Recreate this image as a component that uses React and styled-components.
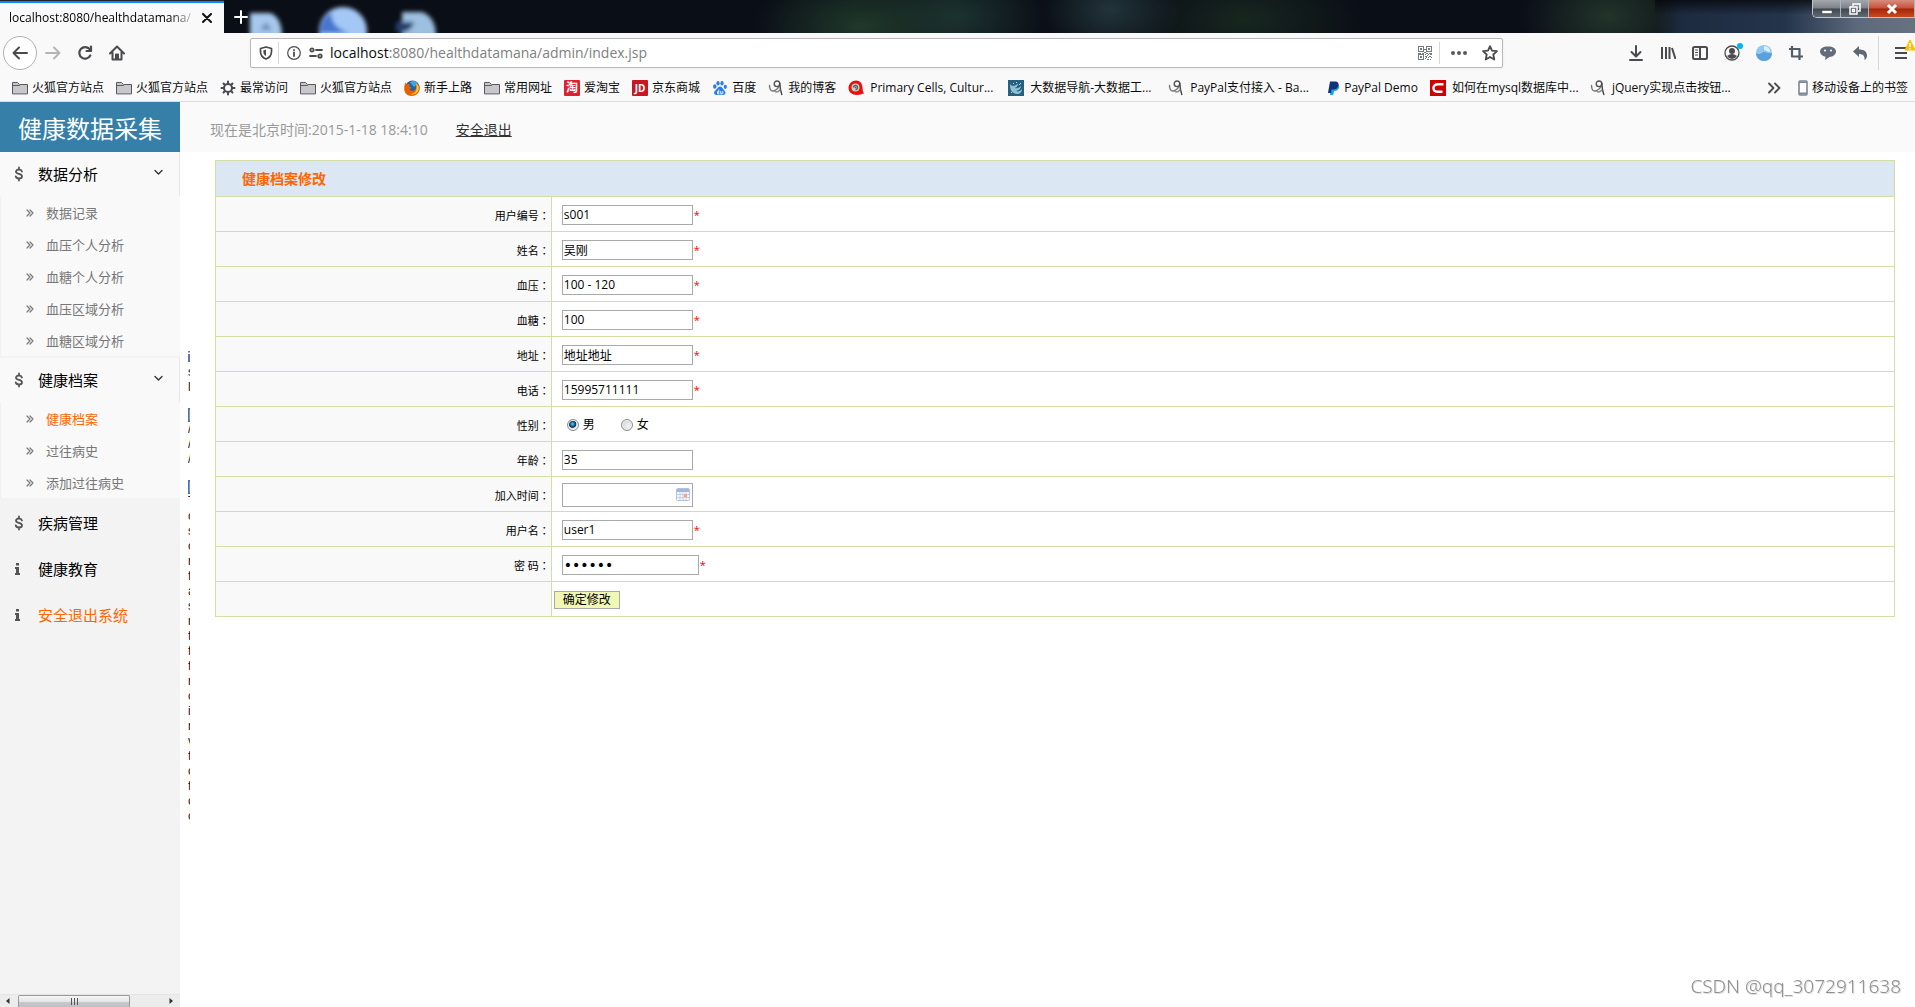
import React, { useState } from "react";
import styled, { createGlobalStyle } from "styled-components";

const GlobalStyle = createGlobalStyle`
    * {
        box-sizing: border-box;
    }
    body {
        margin: 0;
        background: #fff;
        color: #000;
        font-family: "Open Sans", "Noto Sans CJK SC", sans-serif;
        font-size: 12px;
    }
    button, input {
        font-family: inherit;
        color: inherit;
    }
    button {
        cursor: pointer;
    }
    svg {
        display: block;
        flex-shrink: 0;
    }
`;

const Window = styled('div')`
    display: flex;
    flex-direction: column;
    min-height: 100vh;
`;

/* browser frame */

const TitleBar = styled('header')`
    position: relative;
    display: flex;
    height: 33px;
    overflow: hidden;
    background:
        radial-gradient(ellipse 110px 60px at 45% 80%, #20392a, transparent),
        radial-gradient(ellipse 90px 60px at 50% 50%, #1c3230, transparent),
        radial-gradient(ellipse 70px 50px at 58% 30%, #22343a, transparent),
        radial-gradient(ellipse 120px 60px at 65% 60%, #17261f, transparent),
        radial-gradient(ellipse 90px 60px at 84% 50%, #22342a, transparent),
        #0a0e16;
`;

const Tab = styled('div')`
    position: relative;
    display: flex;
    align-items: center;
    width: 224px;
    padding: 2px 8px 0 9px;
    background: #f9f9fa;
    border-top: 1px solid #222;
    box-shadow: inset 0 2px 0 #0a84ff;
`;

const TabTitle = styled('span')`
    flex: 1;
    overflow: hidden;
    white-space: nowrap;
    line-height: 18px;
    mask-image: linear-gradient(to right, #000 85%, transparent);
`;

const PlainButton = styled('button')`
    display: flex;
    align-items: center;
    justify-content: center;
    flex-shrink: 0;
    padding: 0;
    border: 0;
    background: none;
    color: ${props => props.$color || "#4a4a4f"};
    width: ${props => props.$width || 32}px;
    height: ${props => props.$height || 32}px;
`;

const Glass = styled('div')`
    position: absolute;
    top: 0;
    right: 0;
    width: 260px;
    height: 33px;
    background: linear-gradient(to bottom, rgba(5, 8, 12, 0.8), transparent 45%),
        linear-gradient(to right, transparent, #1d2b40 10%, #24344b 50%, #5d6a7c 78%, #68727f);
`;

const WallpaperIcons = styled('svg')`
    position: absolute;
    left: 240px;
    top: 0;
`;

const WindowControls = styled('div')`
    position: absolute;
    top: 0;
    right: 0;
    display: flex;
    height: 18px;
    border: 1px solid #bfc5cb;
    border-top: 0;
    border-right: 0;
    border-radius: 0 0 0 5px;
    overflow: hidden;
`;

const ControlButton = styled('button')`
    display: flex;
    align-items: center;
    justify-content: center;
    width: ${props => props.$close ? 46 : 28}px;
    padding: 0;
    border: 0;
    border-right: 1px solid #aeb5bd;
    background: ${props => props.$close
        ? "linear-gradient(#d88c7e, #c4523b 48%, #a92408 52%, #c54a20)"
        : "linear-gradient(#a3a8ae, #7c828a 48%, #3f464f 52%, #626a74)"};
`;

const NavBar = styled('div')`
    display: flex;
    align-items: center;
    height: 39px;
    padding: 1px 0 0 3px;
    background: #f9f9fa;
`;

const BackButton = styled(PlainButton)`
    border: 1px solid #b1b1b3;
    border-radius: 50%;
    background: #fff;
`;

const Spacer = styled('div')`
    flex: 0 1 117px;
`;

const UrlBar = styled('div')`
    display: flex;
    align-items: center;
    flex: 1;
    height: 30px;
    padding: 0 0 0 2px;
    border: 1px solid #b8b8ba;
    border-radius: 2px;
    background: #fff;
    box-shadow: 0 1px 3px rgba(0, 0, 0, 0.06);
`;

const UrlText = styled('div')`
    flex: 1;
    padding-left: 6px;
    font-size: 14px;
    line-height: 20px;
    color: #808080;
    white-space: nowrap;

    b {
        font-weight: 400;
        color: #0c0c0d;
    }
`;

const Divider = styled('span')`
    width: 1px;
    height: ${props => props.$height || 22}px;
    margin: 0 ${props => props.$gap || 0}px;
    background: #d7d7db;
`;

const Bookmarks = styled('nav')`
    display: flex;
    align-items: center;
    gap: 12px;
    height: 30px;
    padding: 2px 7px 0 12px;
    border-bottom: 1px solid #dcdcde;
    background: #f9f9fa;
`;

const Bookmark = styled('a')`
    display: flex;
    align-items: center;
    gap: ${props => props.$wide ? 6 : 4}px;
    width: ${props => props.$wide ? "148px" : "auto"};
    color: #0c0c0d;
    line-height: 18px;
    text-decoration: none;
    white-space: nowrap;
    flex-shrink: 0;
`;

const BookmarksEnd = styled('div')`
    display: flex;
    align-items: center;
    gap: 8px;
    margin-left: auto;
`;

/* application */

const Page = styled('div')`
    display: flex;
    flex: 1;
`;

const Sidebar = styled('aside')`
    display: flex;
    flex-direction: column;
    width: 180px;
    background: #f3f3f3;
`;

const Brand = styled('h1')`
    margin: 0;
    height: 50px;
    background: #367fa9;
    color: #fff;
    font-size: 24px;
    font-weight: 400;
    line-height: 54px;
    text-align: center;
`;

const Menu = styled('nav')`
    display: flex;
    flex-direction: column;
    flex: 1;
`;

const MenuGroup = styled('div')`
    background: #f9f9f9;
    border-bottom: 2px solid #f3f3f3;
`;

const MenuItem = styled('a')`
    display: flex;
    align-items: center;
    height: ${props => props.$open ? 44 : 46}px;
    padding: 0 16px 0 14px;
    border-right: ${props => props.$open ? "1px solid #e7e7e7" : "0"};
    color: ${props => props.$active ? "#ff6600" : "#000"};
    font-size: 15px;
    line-height: 20px;
    text-decoration: none;
`;

const MenuIcon = styled('span')`
    width: 24px;
    color: #555;
`;

const MenuLabel = styled('span')`
    flex: 1;
`;

const MenuArrow = styled('span')`
    padding-bottom: 4px;
    color: #333;
`;

const SubItem = styled('a')`
    display: flex;
    align-items: center;
    gap: 12px;
    height: 32px;
    padding: 2px 0 0 25px;
    border-left: 1px solid #f1f1f1;
    color: ${props => props.$active ? "#ff6600" : "#777"};
    font-size: 13px;
    line-height: 20px;
    text-decoration: none;

    svg {
        color: #777;
    }
`;

const ScrollTrack = styled('div')`
    display: flex;
    align-items: center;
    height: 13px;
    padding: 0 6px 0 5px;
    background: #ececec;
    border-top: 1px solid #e4e4e4;
`;

const ScrollThumb = styled('div')`
    display: flex;
    align-items: center;
    justify-content: center;
    width: 112px;
    height: 12px;
    margin: 0 auto 0 8px;
    border: 1px solid #9a9a9a;
    border-bottom: 0;
    border-radius: 2px 2px 0 0;
    background: linear-gradient(#f5f5f5, #e6e6e8 50%, #c8c9cc 55%, #bfc0c4);
`;

const Content = styled('div')`
    display: flex;
    flex-direction: column;
    flex: 1;
`;

const TopBar = styled('div')`
    display: flex;
    align-items: center;
    gap: 28px;
    height: 50px;
    padding: 6px 30px 0;
    background: #fafafa;
    color: #999;
    font-size: 14px;
    line-height: 20px;

    a {
        color: #333;
    }
`;

const ContentBody = styled('div')`
    display: flex;
    align-items: flex-start;
    padding: 8px 20px 0 8px;
`;

/* narrow slice of a column of text, the rest of it is cut off */
const Sliver = styled('div')`
    width: 2px;
    margin: 190px 25px 0 0;
    overflow: hidden;
`;

const SliverLine = styled('div')`
    height: 15px;
    margin-bottom: ${props => props.$gap || 0}px;
    color: ${props => props.$head ? "#4f6da0" : "#201020"};
    font-family: "Liberation Sans", sans-serif;
    font-weight: ${props => props.$head ? 700 : 400};
    font-size: ${props => props.$head ? 14 : 12}px;
    line-height: 15px;
    text-indent: ${props => props.$head ? -1 : 0}px;
`;

const FormTable = styled('table')`
    flex: 1;
    border-collapse: collapse;
    table-layout: fixed;

    td, th {
        border: 1px solid #d3dea7;
    }
`;

const TitleCell = styled('th')`
    height: 36px;
    padding: 0 26px;
    background: #dbe7f3;
    color: #ff6600;
    font-size: 14px;
    line-height: 20px;
    text-align: left;
`;

const LabelCell = styled('td')`
    width: 20%;
    height: 35px;
    padding: 2px 1px 0 0;
    background: #f9f9f9;
    font-size: 11px;
    line-height: 18px;
    text-align: right;
`;

const Colon = styled('span')`
    font-family: "Noto Sans CJK TC", sans-serif;
`;

const FieldCell = styled('td')`
    padding: 1px 0 0 ${props => props.$tight ? 2 : 10}px;
`;

const FieldRow = styled('div')`
    display: flex;
    align-items: center;
`;

const TextInput = styled('input')`
    width: ${props => props.$wide ? 137 : 131}px;
    height: ${props => props.$tall ? 24 : 20}px;
    padding: 0 1px;
    border: 1px solid #a9a9a9;
    background: #fff;
    font-size: 12px;
    outline: 0;

    &[type="password"] {
        font-family: "DejaVu Sans", sans-serif;
        font-size: 14px;
    }
`;

const DateBox = styled('div')`
    position: relative;

    svg {
        position: absolute;
        right: 3px;
        top: 5px;
    }
`;

const Star = styled('span')`
    margin-left: 1px;
    color: #f00;
    font-size: 11px;
    line-height: 18px;
`;

const RadioLabel = styled('label')`
    display: flex;
    align-items: center;
    gap: 4px;
    margin: 0 21px 0 5px;
    line-height: 18px;
`;

const Radio = styled('input')`
    appearance: none;
    width: 12px;
    height: 12px;
    margin: 0;
    border: 1px solid #8e8f8f;
    border-radius: 50%;
    background: radial-gradient(circle at 60% 60%, #f4f4f4, #c4c8cc);
    box-shadow: inset 0 0 0 1px #f4f4f4;

    &:checked {
        background: radial-gradient(circle at 45% 40%, #6fd0f5 0, #1b6a9c 25%, #0b2f4d 42%, #e3e6e8 52%);
    }
`;

const SubmitButton = styled('button')`
    width: 66px;
    height: 18px;
    padding: 0;
    border: 1px solid #a9a9a9;
    background: #f1f8b4;
    font-size: 12px;
    line-height: 16px;
`;

const Watermark = styled('div')`
    position: fixed;
    right: 14px;
    bottom: 7px;
    color: #8f8f8f;
    font-family: "Noto Sans", sans-serif;
    font-weight: 300;
    font-size: 19px;
    line-height: 28px;
    text-shadow: 1px 1px 0 #ddd;
`;

/* icons */

const Line = ({ size = 16, box = 16, width = 2, children }) => (
    <svg width={size} height={size} viewBox={`0 0 ${box} ${box}`} fill="none" stroke="currentColor" strokeWidth={width} strokeLinecap="round" strokeLinejoin="round">
        {children}
    </svg>
);

const FolderIcon = () => (
    <Line width={1}>
        <path d="M.5 13.5v-11h5l2 2h8v9z" fill="#c9c7cb" stroke="#58585c" />
        <path d="M.5 5.5h7l1-1" stroke="#58585c" />
    </Line>
);

const GearIcon = () => (
    <Line width={2}>
        <circle cx="8" cy="8" r="4" stroke="#4a4a4f" />
        <path d="M8 1.500v2M8 12.500v2M1.500 8h2M12.500 8h2M3.500 3.500l1 1M11.500 11.500l1 1M12.500 3.500l-1 1M4.500 11.500l-1 1" stroke="#4a4a4f" />
    </Line>
);

const FirefoxIcon = () => (
    <svg width="16" height="16" viewBox="0 0 16 16">
        <circle cx="8.500" cy="7.500" r="7" fill="#1c62ad" />
        <path d="M6 2.500C9 0 13 1 14 4l-4 3z" fill="#43a7df" />
        <path d="M1.500 2.500L3 4.500 6 4l-.5 2.500L8 8l-2.500 1c1 2.500 5 2.500 6.500-.5C13 6 12 4 11 3c3 0 5 3 4.800 6C15 13 12 16 8 16 3 16 0 12.500.2 8.500.2 6 .8 4 1.500 2.500z" fill="#e66000" />
        <path d="M12 3.500c3 2 3.700 5 1.800 8C12 14 9 15 6 14c5 0 8-4 6-10.500z" fill="#ffcb2b" />
    </svg>
);

const TileIcon = ({ bg, label, size = 10 }) => (
    <svg width="16" height="16" viewBox="0 0 16 16">
        <rect width="16" height="16" rx="1" fill={bg} />
        <text x="8" y="12" fontSize={size} fontWeight="700" fill="#fff" textAnchor="middle">{label}</text>
    </svg>
);

const PawIcon = () => (
    <svg width="16" height="16" viewBox="0 0 16 16" fill="#2a7cf0">
        <ellipse cx="2.800" cy="6.500" rx="1.700" ry="2.200" />
        <ellipse cx="6" cy="3.200" rx="1.600" ry="2.300" />
        <ellipse cx="10" cy="3.300" rx="1.600" ry="2.200" />
        <ellipse cx="13.300" cy="6.800" rx="1.600" ry="2.100" />
        <path d="M8 6.500c2 0 2.500 2 4 3.500 2.500 2.500 1.500 5-1 5-1.500 0-4-.3-6 0-3 .3-4-2.500-1.500-4.700C5.500 8.800 6 6.500 8 6.500z" />
        <path d="M6.800 9.500v4.200H5.500v-2h1.300M8.800 11v2.700h2V11" stroke="#fff" strokeWidth=".9" fill="none" />
    </svg>
);

const BlogIcon = () => (
    <Line width={1.4}>
        <path d="M1.500 5.500c0 4 1.500 6 4 5.500 2-.3 4-2 5.500-4.500" stroke="#777" />
        <circle cx="9" cy="3.800" r="2.800" stroke="#555" />
        <path d="M11.800 3.500c.2 4 .7 7.500 2 11" stroke="#444" />
        <path d="M7 11.500c1.500 1 3.500 0 5-1.500" stroke="#888" />
    </Line>
);

const CellsIcon = () => (
    <svg width="16" height="16" viewBox="0 0 16 16">
        <path d="M8 .5c4 0 6.500 3 6.500 7.500 0 2 .5 4 1.500 6-2-1-3 1-7 1C4 15 .5 12 .5 8S4 .5 8 .5z" fill="#f20c0c" />
        <circle cx="7.500" cy="7.500" r="4" fill="#c3d0cb" />
        <path d="M5.500 7.500a2 2 0 1 1 2 2" fill="none" stroke="#456b60" strokeWidth="1.300" />
        <circle cx="7.500" cy="7.500" r=".8" fill="#456b60" />
    </svg>
);

const BigDataIcon = () => (
    <svg width="16" height="16" viewBox="0 0 16 16">
        <rect width="16" height="16" fill="#27607f" />
        <path d="M2.500 4C1 9 4 14 9 14c3 0 5-2 5-5-1.500 2-4 3-6 2 3-.5 5-2.500 5-5-2 2-4 2.500-6 2 2-1 3-2.500 3-4.500C8.500 5 7 6 5 6 4 6 3 5 2.500 4z" fill="#8fbfd3" />
        <path d="M5 3l1 1M8 2l1 1M12 3l1 1M3 12l1 1M11 5l1-1" stroke="#b9dbe8" strokeWidth="1" />
    </svg>
);

const PaypalIcon = () => (
    <svg width="12" height="16" viewBox="0 0 12 16">
        <path d="M4 4h6c2 1 2 6-3 7H6l-.8 4H2z" fill="#1f9fde" />
        <path d="M2 1.500h5c3 0 4 2 3.300 4.500C9.500 8.500 8 9.500 5 9.500H3.500L3 13H0z" fill="#12307c" />
    </svg>
);

const CsdnIcon = () => (
    <svg width="16" height="16" viewBox="0 0 16 16">
        <rect width="16" height="16" fill="#d00000" />
        <path d="M13.500 4.300H8C5 4.300 3.500 6 3.500 8c0 2.500 1.500 3.700 4 3.700h5" fill="none" stroke="#fff" strokeWidth="2.400" />
    </svg>
);

const PhoneIcon = () => (
    <svg width="10" height="16" viewBox="0 0 10 16">
        <rect x="1" y="1" width="8" height="14" rx="1" fill="#fff" stroke="#7c8894" strokeWidth="1.600" />
        <path d="M1 12.500h8v2H1zM1 1.500h8v1.500H1z" fill="#7c8894" />
    </svg>
);

const QrIcon = () => (
    <svg width="14" height="14" viewBox="0 0 14 14" fill="none" stroke="#737883" strokeWidth="1" shapeRendering="crispEdges">
        <path d="M.5.5h5v5h-5zM8.500.5h5v5h-5zM.5 8.500h5v5h-5z" />
        <path d="M2 2h2v2H2zM10 2h2v2h-2zM2 10h2v2H2z" fill="#737883" stroke="none" />
        <path d="M6 3.500h2M6 6.500h2M0 7h3M4 7h2M8 7.500h2M11 7h3M7 8.500h1M10 8.500h1M12 8.500h2M7 10.500h2M9 9.500h1M11 10.500h2M8 11.500h1M10 11.500h1M13 11.500h1M7 12.500h1M9 13.500h2M12 13.500h1" />
    </svg>
);

const CalendarIcon = () => (
    <svg width="14" height="13" viewBox="0 0 14 13">
        <rect x=".5" y=".5" width="13" height="12" rx="1" fill="#f4f7fc" stroke="#b5c1da" />
        <path d="M1 1h12v3H1z" fill="#9db7e8" />
        <path d="M1 6.500h12M1 9.500h12M4 4v8M7 4v8M10 4v8" stroke="#c3cfe6" />
        <path d="M8 6h3v3H8z" fill="#f0a48c" />
    </svg>
);

const AngleIcon = () => (
    <Line size={8} box={8} width={1.200}>
        <path d="M1 1l3 3-3 3M4 1l3 3-3 3" />
    </Line>
);

const DownIcon = () => (
    <Line size={9} box={9} width={1.400}>
        <path d="M1 2.500L4.500 6 8 2.500" />
    </Line>
);

const DollarIcon = () => (
    <Line size={16} box={16} width={1.800}>
        <path d="M8 5.500C7.500 4 6.500 3.500 5 3.500c-2 0-3 .9-3 2.200C2 8.500 8 7.200 8 10.200c0 1.500-1.200 2.300-3 2.300S2 11.700 1.700 10.300M5 1.500v2M5 12.500v2" />
    </Line>
);

const InfoIcon = () => (
    <svg width="8" height="12" viewBox="0 0 8 12" fill="#555">
        <path d="M2 0h3v2.500H2zM1 4h4v6h1v2H1v-2h1V6H1z" />
    </svg>
);

const bookmarks = [
    { label: "火狐官方站点", icon: <FolderIcon /> },
    { label: "火狐官方站点", icon: <FolderIcon /> },
    { label: "最常访问", icon: <GearIcon /> },
    { label: "火狐官方站点", icon: <FolderIcon /> },
    { label: "新手上路", icon: <FirefoxIcon /> },
    { label: "常用网址", icon: <FolderIcon /> },
    { label: "爱淘宝", icon: <TileIcon bg="#e02030" label="淘" size={12} /> },
    { label: "京东商城", icon: <TileIcon bg="#c81623" label="JD" /> },
    { label: "百度", icon: <PawIcon /> },
    { label: "我的博客", icon: <BlogIcon /> },
    { label: "Primary Cells, Cultur...", icon: <CellsIcon />, wide: true },
    { label: "大数据导航-大数据工...", icon: <BigDataIcon />, wide: true },
    { label: "PayPal支付接入 - Ba...", icon: <BlogIcon />, wide: true },
    { label: "PayPal Demo", icon: <PaypalIcon /> },
    { label: "如何在mysql数据库中...", icon: <CsdnIcon />, wide: true },
    { label: "jQuery实现点击按钮...", icon: <BlogIcon />, wide: true },
];

const menuGroups = [
    { label: "数据分析", items: ["数据记录", "血压个人分析", "血糖个人分析", "血压区域分析", "血糖区域分析"] },
    { label: "健康档案", items: ["健康档案", "过往病史", "添加过往病史"], active: 0 },
];

const sliver = [
    { text: "i", head: true }, { text: "s" }, { text: "l", gap: 12 },
    { text: "[", head: true }, { text: "/" }, { text: "/" }, { text: "/", gap: 12 },
    { text: "[", head: true }, { text: "T" },
    ..."csorfasrfffrcirvfcfcc".split("").map(text => ({ text })),
];

const fields = [
    { id: "userId", label: "用户编号", value: "s001", required: true },
    { id: "realName", label: "姓名", value: "吴刚", required: true },
    { id: "pressure", label: "血压", value: "100 - 120", required: true },
    { id: "sugar", label: "血糖", value: "100", required: true },
    { id: "address", label: "地址", value: "地址地址", required: true },
    { id: "phone", label: "电话", value: "15995711111", required: true },
    { id: "sex", label: "性别", type: "radio" },
    { id: "age", label: "年龄", value: "35" },
    { id: "joinDate", label: "加入时间", value: "", type: "date" },
    { id: "userName", label: "用户名", value: "user1", required: true },
    { id: "password", label: "密 码", value: "123456", type: "password", required: true },
];

const BrowserTitle = () => (
    <TitleBar>
        <WallpaperIcons width="210" height="33" viewBox="0 0 210 33">
            <defs>
                <filter id="soft"><feGaussianBlur stdDeviation="2" /></filter>
            </defs>
            <g filter="url(#soft)">
                <path d="M10 13h20q12 4 12 24H10z" fill="#a6c8ec" />
                <path d="M20 30l6-8 6 8z" fill="#6d8fb5" />
                <circle cx="103" cy="31" r="24" fill="#a4c8f5" />
                <path d="M80 33q0-16 12-20-2 14 18 20z" fill="#4576d0" />
                <path d="M162 12h20q14 5 14 25h-34z" fill="#9dbfe0" />
                <path d="M156 22h18q-2 8-10 10h-8z" fill="#20406d" />
            </g>
        </WallpaperIcons>
        <Tab>
            <TabTitle>localhost:8080/healthdatamana/</TabTitle>
            <PlainButton $width={18} $height={18} $color="#111" aria-label="关闭标签页">
                <Line size={10} box={10}><path d="M1 1l8 8M9 1L1 9" /></Line>
            </PlainButton>
        </Tab>
        <PlainButton $color="#fff" $width={34} $height={33} aria-label="新标签页">
            <Line size={14} box={14} width={2}><path d="M7 1v12M1 7h12" /></Line>
        </PlainButton>
        <Glass />
        <WindowControls>
            <ControlButton aria-label="最小化">
                <svg width="12" height="12" viewBox="0 0 12 12"><path d="M1 7.500h10v3H1z" fill="#fff" stroke="#444" strokeWidth=".5" /></svg>
            </ControlButton>
            <ControlButton aria-label="还原">
                <svg width="12" height="12" viewBox="0 0 12 12" fill="none" stroke="#fff" strokeWidth="1.500"><path d="M4 3V1h7v7H9M1 4h7v7H1z" /><path d="M3.500 6.500h2v2h-2z" /></svg>
            </ControlButton>
            <ControlButton $close aria-label="关闭">
                <svg width="12" height="12" viewBox="0 0 12 12" stroke="#fff" strokeWidth="3"><path d="M2 2l8 8M10 2l-8 8" /></svg>
            </ControlButton>
        </WindowControls>
    </TitleBar>
);

const BrowserNav = () => (
    <NavBar>
        <BackButton $width={34} $height={34} aria-label="后退">
            <Line><path d="M15 8H1.500M7 2.500L1.500 8 7 13.500" /></Line>
        </BackButton>
        <PlainButton $color="#b5b5b7" aria-label="前进">
            <Line><path d="M1 8h13.500M9 2.500L14.500 8 9 13.500" /></Line>
        </PlainButton>
        <PlainButton aria-label="刷新">
            <Line width={2.200}><path d="M13.300 10.500a5.800 5.800 0 1 1-.8-6.500M14 1.500V6H9.500" /></Line>
        </PlainButton>
        <PlainButton aria-label="主页">
            <Line>
                <path d="M1 8.500l7-7 7 7M3.500 7.500v7h9v-7" />
                <path d="M6.500 14V9h3v5z" fill="currentColor" strokeWidth="1" />
            </Line>
        </PlainButton>
        <Spacer />
        <UrlBar>
            <PlainButton $width={25} aria-label="跟踪保护">
                <Line size={14} box={14} width={1.700}>
                    <path d="M7 1l5.500 1.500v3C12.500 9 11 11.500 7 13 3 11.500 1.500 9 1.500 5.500v-3z" />
                    <path d="M7 3.500v6.500C5 9 4.300 7.500 4.300 4.500z" fill="currentColor" stroke="none" />
                </Line>
            </PlainButton>
            <Divider />
            <PlainButton $width={29} aria-label="网站信息">
                <Line size={14} box={14} width={1.200}>
                    <circle cx="7" cy="7" r="6.300" />
                    <path d="M7 6.500V10M7 4v.2" strokeWidth="1.800" />
                </Line>
            </PlainButton>
            <PlainButton $width={16} aria-label="权限">
                <Line size={14} box={14} width={1.800}>
                    <circle cx="3" cy="4" r="1.700" /><path d="M7 4h6" />
                    <circle cx="11" cy="10" r="1.700" /><path d="M1 10h6" />
                </Line>
            </PlainButton>
            <UrlText><b>localhost</b>:8080/healthdatamana/admin/index.jsp</UrlText>
            <PlainButton $width={28} aria-label="二维码"><QrIcon /></PlainButton>
            <Divider />
            <PlainButton $width={38} aria-label="页面操作">
                <svg width="16" height="16" viewBox="0 0 16 16" fill="#5a5a5f"><circle cx="2" cy="8" r="2" /><circle cx="8" cy="8" r="2" /><circle cx="14" cy="8" r="2" /></svg>
            </PlainButton>
            <PlainButton $width={24} aria-label="收藏">
                <Line width={1.800}><path d="M8 1.200l2 4.500 5 .5-3.700 3.300 1 5L8 12l-4.300 2.500 1-5L1 6.200l5-.5z" /></Line>
            </PlainButton>
        </UrlBar>
        <Spacer />
        <PlainButton aria-label="下载"><Line><path d="M8 1v10M3.500 7L8 11.500 12.500 7M2 15h12" /></Line></PlainButton>
        <PlainButton aria-label="书库"><Line><path d="M2 2v12M6 2v12M9.500 2v12M12 3l3.500 11" strokeLinecap="butt" /></Line></PlainButton>
        <PlainButton aria-label="侧栏"><Line><path d="M2.500 2h11q1.500 0 1.500 1.500v9q0 1.500-1.500 1.500h-11Q1 14 1 12.500v-9Q1 2 2.500 2zM8 2v12" /><path d="M3.500 5h2M3.500 7.500h2M3.500 10h2" strokeWidth="1" /></Line></PlainButton>
        <PlainButton aria-label="账户">
            <svg width="22" height="22" viewBox="0 0 22 22" fill="#4a4a4f">
                <circle cx="11" cy="11" r="7" fill="none" stroke="#4a4a4f" strokeWidth="1.300" />
                <circle cx="11" cy="9" r="3" />
                <path d="M6 14q5-4 10 0-2 3-5 3t-5-3z" />
                <circle cx="19" cy="4" r="3" fill="#00b3f4" />
            </svg>
        </PlainButton>
        <PlainButton aria-label="扩展">
            <svg width="16" height="16" viewBox="0 0 16 16">
                <circle cx="8" cy="8" r="8" fill="#8fc9f0" />
                <path d="M0 8c4 3 6-1 8-1s5 2 8 1c0 5-4 8-8 8S0 13 0 8z" fill="#5b9fdb" />
                <path d="M8 1c4 0 6 3 6.500 5.500C12 8 10 5 8 5z" fill="#d8effb" />
            </svg>
        </PlainButton>
        <PlainButton aria-label="截图" $color="#525c68"><Line width={2.200}><path d="M4 1v10.500h11M1 4h10.500v11" strokeLinecap="butt" /></Line></PlainButton>
        <PlainButton aria-label="聊天">
            <svg width="16" height="16" viewBox="0 0 16 16" fill="#626d79">
                <path d="M8 1.500c5 0 8 2 8 5s-3 5.200-6.500 5.500L5 15l.5-3.200C2 11 0 9.200 0 6.500c0-3 3-5 8-5z" />
                <circle cx="5" cy="5.500" r="1" fill="#fff" /><circle cx="11" cy="5.500" r="1" fill="#fff" />
            </svg>
        </PlainButton>
        <PlainButton aria-label="撤销">
            <svg width="16" height="16" viewBox="0 0 16 16" fill="#5d6874"><path d="M7 1v3.500c5 0 8 2 8 6 0 2-1 3.500-2.500 4.500.5-4-1.500-6-5.500-6V12L1 6.500z" /></svg>
        </PlainButton>
        <Divider $height={34} $gap={2} />
        <PlainButton $width={34} aria-label="菜单">
            <svg width="34" height="28" viewBox="0 0 34 28">
                <path d="M14 9h12M14 14h12M14 19h12" stroke="#4a4a4f" strokeWidth="2" />
                <path d="M29 1l5 10H24z" fill="#ffbf00" stroke="#ffbf00" strokeLinejoin="round" />
                <path d="M29 4v4M29 9v1.500" stroke="#fff" strokeWidth="1.500" />
            </svg>
        </PlainButton>
    </NavBar>
);

const BookmarksBar = () => (
    <Bookmarks>
        {bookmarks.map((item, index) => (
            <Bookmark key={index} href="#" $wide={item.wide}>
                {item.icon}
                {item.label}
            </Bookmark>
        ))}
        <BookmarksEnd>
            <PlainButton $width={32} $height={18} aria-label="更多书签">
                <Line width={1.800}><path d="M3 3.500L7.500 8 3 12.500M9 3.500L13.500 8 9 12.500" /></Line>
            </PlainButton>
            <Bookmark href="#"><PhoneIcon />移动设备上的书签</Bookmark>
        </BookmarksEnd>
    </Bookmarks>
);

const SideMenu = () => (
    <Sidebar>
        <Brand>健康数据采集</Brand>
        <Menu>
            {menuGroups.map(group => (
                <MenuGroup key={group.label}>
                    <MenuItem href="#" $open>
                        <MenuIcon><DollarIcon /></MenuIcon>
                        <MenuLabel>{group.label}</MenuLabel>
                        <MenuArrow><DownIcon /></MenuArrow>
                    </MenuItem>
                    {group.items.map((item, index) => (
                        <SubItem key={item} href="#" $active={group.active === index}>
                            <AngleIcon />
                            {item}
                        </SubItem>
                    ))}
                </MenuGroup>
            ))}
            <MenuItem href="#"><MenuIcon><DollarIcon /></MenuIcon>疾病管理</MenuItem>
            <MenuItem href="#"><MenuIcon><InfoIcon /></MenuIcon>健康教育</MenuItem>
            <MenuItem href="#" $active><MenuIcon><InfoIcon /></MenuIcon>安全退出系统</MenuItem>
        </Menu>
        <ScrollTrack>
            <svg width="5" height="8" viewBox="0 0 5 8"><path d="M4.500 1v6L1 4z" fill="#333" /></svg>
            <ScrollThumb>
                <svg width="9" height="7" viewBox="0 0 9 7"><path d="M1.500 0v7M4.500 0v7M7.500 0v7" stroke="#555" /></svg>
            </ScrollThumb>
            <svg width="5" height="8" viewBox="0 0 5 8"><path d="M.5 1v6L4 4z" fill="#333" /></svg>
        </ScrollTrack>
    </Sidebar>
);

const Field = ({ field, value, onChange }) => {
    if (field.type === "radio") {
        return (
            <FieldRow>
                <RadioLabel><Radio type="radio" name="sex" defaultChecked />男</RadioLabel>
                <RadioLabel><Radio type="radio" name="sex" />女</RadioLabel>
            </FieldRow>
        );
    }
    if (field.type === "date") {
        return (
            <FieldRow>
                <DateBox>
                    <TextInput id={field.id} $tall value={value} onChange={onChange} />
                    <CalendarIcon />
                </DateBox>
            </FieldRow>
        );
    }
    return (
        <FieldRow>
            <TextInput
                id={field.id}
                type={field.type || "text"}
                $wide={field.type === "password"}
                value={value}
                onChange={onChange}
            />
            {field.required && <Star>*</Star>}
        </FieldRow>
    );
};

const RecordForm = () => {
    const [values, setValues] = useState(
        Object.fromEntries(fields.map(field => [field.id, field.value]))
    );
    const update = id => event => setValues({ ...values, [id]: event.target.value });

    return (
        <FormTable>
            <thead>
                <tr><TitleCell colSpan={2}>健康档案修改</TitleCell></tr>
            </thead>
            <tbody>
                {fields.map(field => (
                    <tr key={field.id}>
                        <LabelCell>
                            {field.type === "radio"
                                ? <span>{field.label}<Colon>：</Colon></span>
                                : <label htmlFor={field.id}>{field.label}<Colon>：</Colon></label>}
                        </LabelCell>
                        <FieldCell>
                            <Field field={field} value={values[field.id]} onChange={update(field.id)} />
                        </FieldCell>
                    </tr>
                ))}
                <tr>
                    <LabelCell />
                    <FieldCell $tight><SubmitButton type="button">确定修改</SubmitButton></FieldCell>
                </tr>
            </tbody>
        </FormTable>
    );
};

const App = () => (
    <Window>
        <GlobalStyle />
        <BrowserTitle />
        <BrowserNav />
        <BookmarksBar />
        <Page>
            <SideMenu />
            <Content>
                <TopBar>
                    <span>现在是北京时间:2015-1-18 18:4:10</span>
                    <a href="#">安全退出</a>
                </TopBar>
                <ContentBody>
                    <Sliver>
                        {sliver.map((line, index) => (
                            <SliverLine key={index} $head={line.head} $gap={line.gap}>{line.text}</SliverLine>
                        ))}
                    </Sliver>
                    <RecordForm />
                </ContentBody>
            </Content>
        </Page>
        <Watermark>CSDN @qq_3072911638</Watermark>
    </Window>
);

export default App;
